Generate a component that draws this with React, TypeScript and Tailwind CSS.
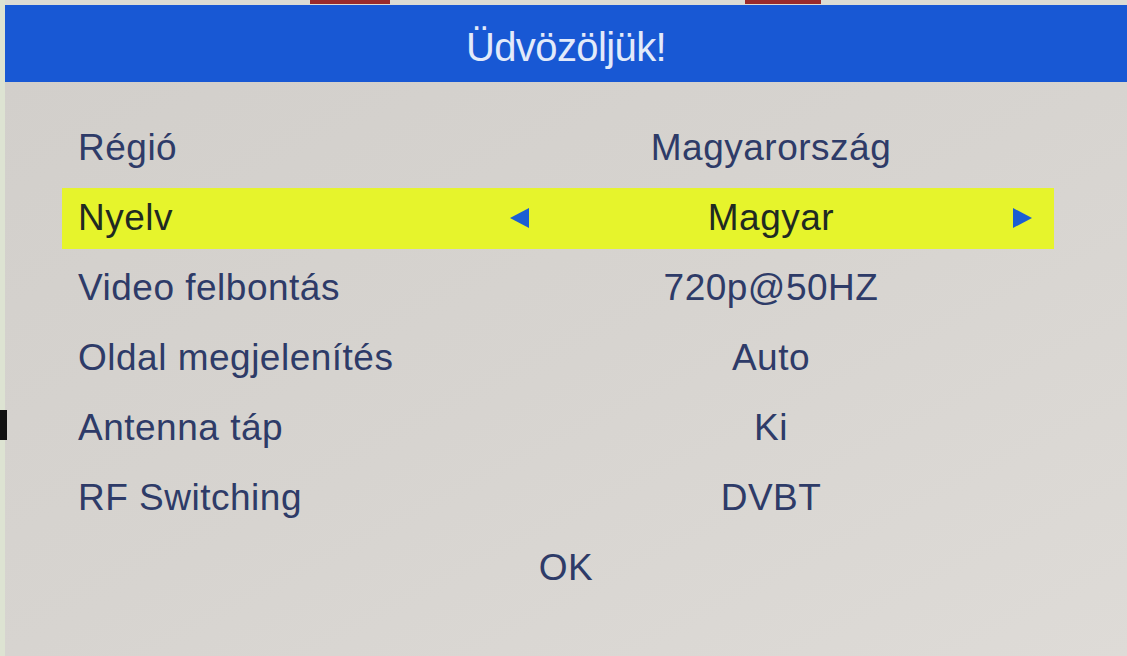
import React from "react";

const rows = [
  { label: "Régió", value: "Magyarország" },
  { label: "Nyelv", value: "Magyar", active: true },
  { label: "Video felbontás", value: "720p@50HZ" },
  { label: "Oldal megjelenítés", value: "Auto" },
  { label: "Antenna táp", value: "Ki" },
  { label: "RF Switching", value: "DVBT" },
];

function Tri({ dir }: { dir: "l" | "r" }) {
  return (
    <svg width="19" height="20" viewBox="0 0 19 20">
      {dir === "l" ? (
        <polygon points="19,0 19,20 0,10" fill="#1b5ed2" />
      ) : (
        <polygon points="0,0 0,20 19,10" fill="#1b5ed2" />
      )}
    </svg>
  );
}

export default function App() {
  return (
    <div
      className="relative w-[1127px] h-[656px] overflow-hidden flex bg-[#d4d1cd]"
      style={{ fontFamily: '"Liberation Sans", Arial, sans-serif' }}
    >
      <div className="w-[5px] h-full bg-[#dde3d2]" />
      <div className="absolute left-0 top-[410px] w-[7px] h-[30px] bg-[#111]" />
      <div className="flex-1 flex flex-col">
        <div className="h-[5px] bg-[#dcdcd4] relative">
          <div className="absolute left-[305px] top-0 w-[80px] h-[4px] bg-[#9a2a2a]" />
          <div className="absolute left-[740px] top-0 w-[76px] h-[4px] bg-[#9a2a2a]" />
        </div>
        <div className="h-[77px] bg-[#1858d4] flex items-center justify-center text-[#e2eafa] text-[40px] tracking-[-0.6px] pt-[6px]">
          Üdvözöljük!
        </div>
        <div className="flex-1 flex flex-col pt-[31px] bg-gradient-to-br from-[#d2cfcb] via-[#d7d4d0] to-[#dedbd7]">
          {rows.map((r) => (
            <div key={r.label} className="h-[70px] flex items-center">
              <div
                className={
                  "ml-[57px] w-[992px] h-[61px] flex items-center text-[37px] tracking-[0.5px] " +
                  (r.active ? "bg-[#e6f42c] text-[#1f2a22]" : "text-[#2e3b68]")
                }
              >
                <div className="w-[438px] pl-[16px]">{r.label}</div>
                <div className="w-[544px] flex items-center justify-between pl-[10px] pr-[12px]">
                  <div className="w-[19px]">{r.active && <Tri dir="l" />}</div>
                  <div>{r.value}</div>
                  <div className="w-[19px]">{r.active && <Tri dir="r" />}</div>
                </div>
              </div>
            </div>
          ))}
          <div className="h-[70px] flex items-center justify-center text-[37px] tracking-[0.5px] text-[#2e3b68]">
            OK
          </div>
        </div>
      </div>
    </div>
  );
}
